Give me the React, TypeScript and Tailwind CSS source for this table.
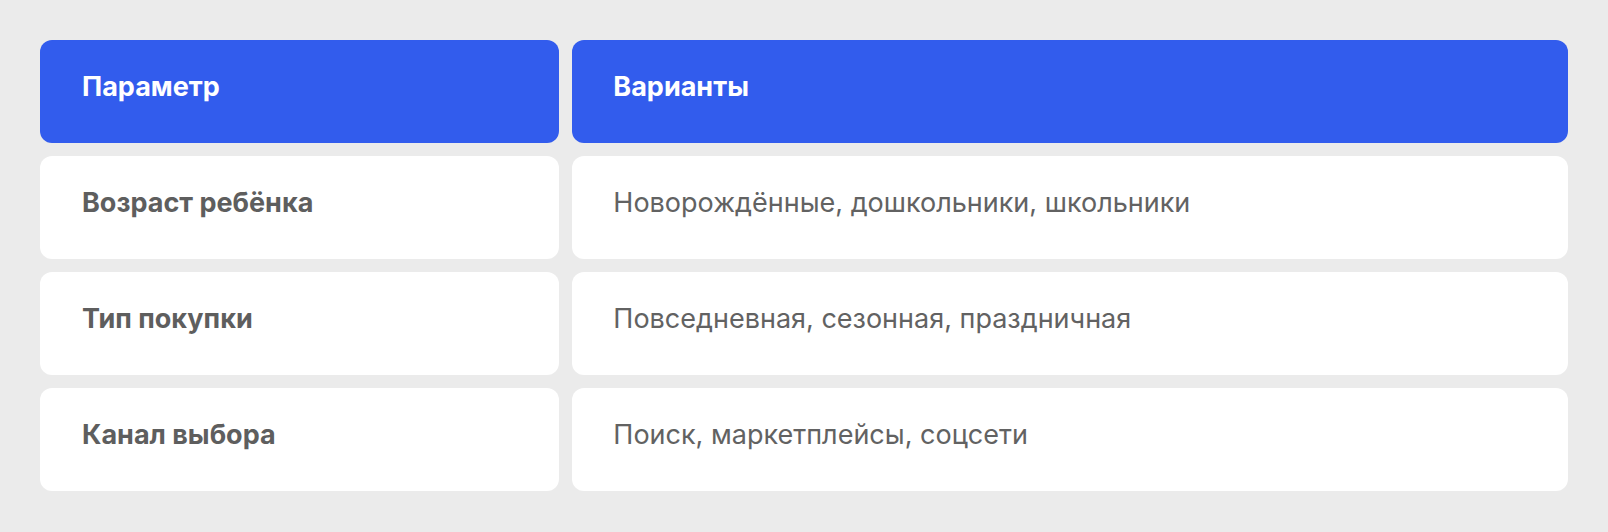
const rows = [
  { param: "Возраст ребёнка", value: "Новорождённые, дошкольники, школьники" },
  { param: "Тип покупки", value: "Повседневная, сезонная, праздничная" },
  { param: "Канал выбора", value: "Поиск, маркетплейсы, соцсети" },
];

export default function App() {
  return (
    <div className="min-h-[532px] w-full bg-[#ebebeb] p-10 font-['Inter',sans-serif]">
      <div className="grid grid-cols-[519fr_995fr] gap-[13px]">
        <div className="h-[103px] rounded-xl bg-[#325ced] px-[42px] pt-[27px] text-[27px] font-bold text-white">
          Параметр
        </div>
        <div className="h-[103px] rounded-xl bg-[#325ced] px-[41px] pt-[27px] text-[27px] font-bold text-white">
          Варианты
        </div>
        {rows.map((r) => (
          <>
            <div key={r.param} className="h-[103px] rounded-xl bg-white px-[42px] pt-[27px] text-[27px] font-bold text-[#5e5e5e]">
              {r.param}
            </div>
            <div key={r.value} className="h-[103px] rounded-xl bg-white px-[41px] pt-[27px] text-[27px] text-[#626262]">
              {r.value}
            </div>
          </>
        ))}
      </div>
    </div>
  );
}
